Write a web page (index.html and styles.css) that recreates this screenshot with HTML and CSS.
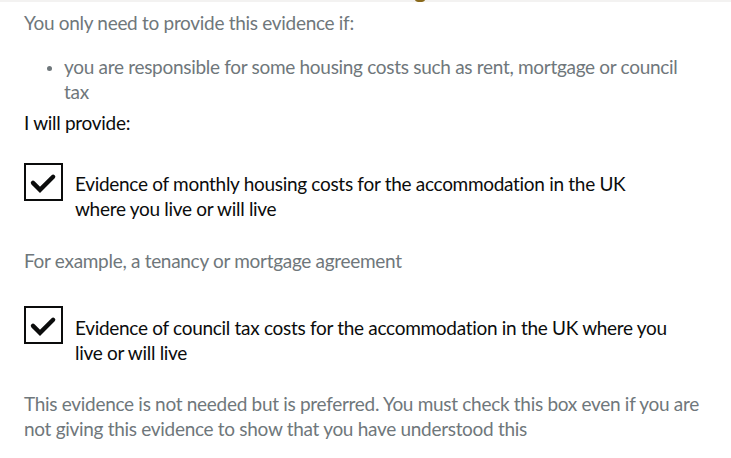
FILE: index.html
```html
<!DOCTYPE html>
<html lang="en">
<head>
  <meta charset="UTF-8">
  <meta name="viewport" content="width=device-width, initial-scale=1.0">
  <title>Evidence</title>
  <link rel="stylesheet" href="styles.css">
</head>
<body>
  <div class="topbar"><span class="dot"></span></div>
  <main class="content">
    <p class="hint intro">You only need to provide this evidence if:</p>
    <ul class="list hint">
      <li>you are responsible for some housing costs such as rent, mortgage or council tax</li>
    </ul>
    <p class="legend">I will provide:</p>

    <div class="check-item">
      <span class="box">
        <svg viewBox="0 0 40 38" width="40" height="38" aria-hidden="true">
          <path d="M8 20 L16 28 L31 13" fill="none" stroke="#0b0c0c" stroke-width="5" stroke-linecap="round" stroke-linejoin="miter"/>
        </svg>
      </span>
      <label class="check-label">Evidence of monthly housing costs for the accommodation in the UK where you live or will live</label>
    </div>
    <p class="hint item-hint">For example, a tenancy or mortgage agreement</p>

    <div class="check-item second">
      <span class="box">
        <svg viewBox="0 0 40 38" width="40" height="38" aria-hidden="true">
          <path d="M8 20 L16 28 L31 13" fill="none" stroke="#0b0c0c" stroke-width="5" stroke-linecap="round" stroke-linejoin="miter"/>
        </svg>
      </span>
      <label class="check-label">Evidence of council tax costs for the accommodation in the UK where you live or will live</label>
    </div>
    <p class="hint item-hint last">This evidence is not needed but is preferred. You must check this box even if you are not giving this evidence to show that you have understood this</p>
  </main>
</body>
</html>
```

FILE: styles.css
```css
:root {
  --text: #0b0c0c;
  --muted: #6f777b;
  --strip: #f3f2f1;
}
* { box-sizing: border-box; }
body {
  margin: 0;
  font-family: Lato, "Liberation Sans", sans-serif;
  font-size: 19px;
  line-height: 25px;
  letter-spacing: -0.3px;
  color: var(--text);
  background: #fff;
}

.topbar {
  height: 2px;
  background: var(--strip);
  position: relative;
}
.topbar .dot {
  position: absolute;
  left: 415px; top: -3px;
  width: 10px; height: 5px;
  border-radius: 50%;
  background: #8a6a1c;
}

.content {
  padding: 8px 0 0 24px;
  width: 710px;
}
p { margin: 0; }
.hint { color: var(--muted); }

.list {
  margin: 19px 0 0;
  padding-left: 40px;
  padding-right: 12px;
}
.list li::marker { font-size: 15px; color: #6f777b; }

.legend { margin-top: 6px; }

.check-item {
  display: flex;
  align-items: flex-start;
  gap: 12px;
  margin-top: 28px;
}
.check-item.second { margin-top: 33px; }
.box {
  flex: none;
  width: 39px; height: 38px;
  border: 2.5px solid var(--text);
  display: flex;
  align-items: center;
  justify-content: center;
}
.box svg { width: 36px; height: 34px; }
.check-label {
  padding-top: 8px;
  padding-right: 32px;
}
.second .check-label { padding-top: 9px; }
.item-hint { margin-top: 27px; }
.item-hint.last { margin-top: 26px; }
```
